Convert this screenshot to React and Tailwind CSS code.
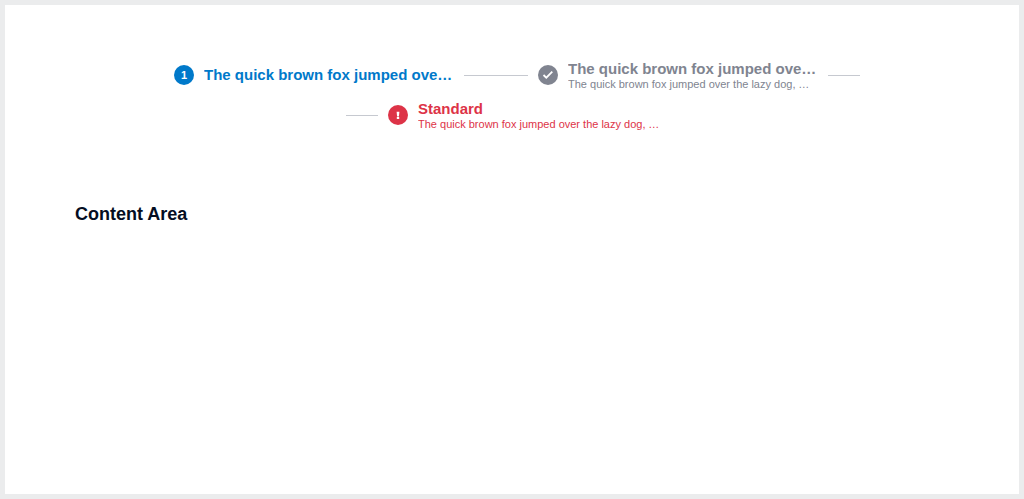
const fox = 'The quick brown fox jumped over the lazy dog, The quick brown fox jumped over the lazy dog';

function Line() {
  return <span aria-hidden="true" className="h-px w-8 shrink-0 bg-[#c6c9d0]" />;
}

function CheckIcon() {
  return (
    <svg aria-hidden="true" viewBox="0 0 20 20" className="size-5" fill="none" stroke="currentColor" strokeWidth="1.8">
      <path d="M5.5 10 8.3 12.7 14.3 6.7" />
    </svg>
  );
}

function AlertIcon() {
  return (
    <svg aria-hidden="true" viewBox="0 0 20 20" className="size-5" fill="currentColor">
      <path d="M8.6 6.8h2.8l-.5 4.6H9.1z" />
      <rect x="8.8" y="12" width="2.4" height="2" />
    </svg>
  );
}

function Step({ bullet, bulletColor, textColor, title, description, lineBefore, lineAfter }) {
  return (
    <li className="flex h-10 max-w-full items-center">
      {lineBefore && <Line />}
      <div className={`flex min-w-0 items-center gap-2.5 px-2.5 ${textColor}`}>
        <span
          className={`flex size-5 shrink-0 items-center justify-center rounded-full text-[11px] leading-none font-bold text-white ${bulletColor}`}
        >
          {bullet}
        </span>
        <div className={`w-[250px] min-w-0 ${description ? 'pt-0.5' : ''}`}>
          <div className="truncate text-[15px] leading-4 font-bold">{title}</div>
          {description && <div className="mr-2 truncate text-[11px] leading-3.5">{description}</div>}
        </div>
      </div>
      {lineAfter && <Line />}
    </li>
  );
}

export default function App() {
  return (
    <div className="min-h-screen border-5 border-[#ebeced] bg-white px-[70px] pt-[50px] font-['Liberation_Sans',Arial,sans-serif]">
      <ol className="flex flex-wrap justify-center">
        <Step bullet="1" bulletColor="bg-[#0079ca]" textColor="text-[#0079ca]" title={fox} lineAfter />
        <Step
          bullet={<CheckIcon />}
          bulletColor="bg-[#808490]"
          textColor="text-[#808490]"
          title={fox}
          description={fox}
          lineBefore
          lineAfter
        />
        <Step
          bullet={<AlertIcon />}
          bulletColor="bg-[#dd3347]"
          textColor="text-[#dd3347]"
          title="Standard"
          description={fox}
          lineBefore
        />
      </ol>
      <h1 className="mt-[65px] text-lg font-bold text-[#040d22]">Content Area</h1>
    </div>
  );
}
